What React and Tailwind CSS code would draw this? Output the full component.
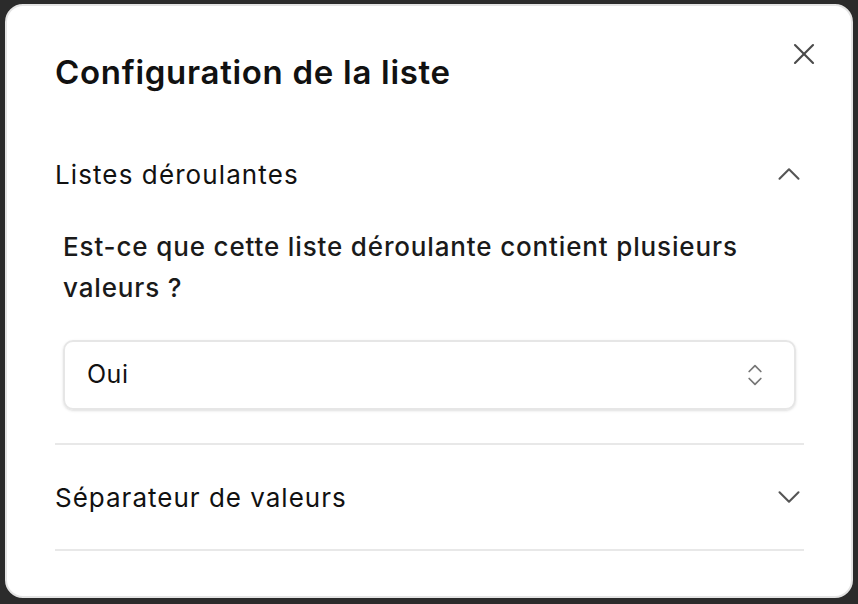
import { X, ChevronUp, ChevronDown, ChevronsUpDown } from "lucide-react";

export default function App() {
    return (
        <div className="w-[858px] h-[604px] bg-[#2b2b2b] pt-[4px] pl-[5px] pr-[5px] pb-[6px]" style={{ fontFamily: "Inter, 'Noto Sans', sans-serif" }}>
            <div className="relative w-full h-full bg-white border-2 border-[#e4e4e4] rounded-[18px] pl-12 pr-[47px] pt-[42px]">
                {/* Close */}
                <button className="absolute top-[30px] right-[29px] text-[#4a4a4a]">
                    <X size={36} strokeWidth={1.4} />
                </button>

                <h2 className="text-[33px] leading-[48px] font-semibold text-[#111] tracking-[0.7px]">
                    Configuration de la liste
                </h2>

                {/* Section 1 */}
                <div className="border-b-2 border-[#e8e8e8] mt-[46px]">
                    <div className="flex items-center justify-between h-[64px]">
                        <span className="text-[26px] text-[#111] tracking-[1.1px]">Listes déroulantes</span>
                        <ChevronUp size={38} strokeWidth={1.3} className="text-[#555] -mr-1" />
                    </div>
                    <div className="px-2 pb-[33px]">
                        <p className="text-[26px] leading-[41px] font-medium text-[#1a1a1a] tracking-[0.85px] mt-[20px]">
                            Est-ce que cette liste déroulante contient plusieurs valeurs ?
                        </p>
                        <div className="mt-[32px] h-[70px] flex items-center justify-between border-2 border-[#e6e6e6] rounded-[10px] shadow-sm pl-[22px] pr-[25px]">
                            <span className="text-[25px] text-[#111] tracking-[0.5px]">Oui</span>
                            <ChevronsUpDown size={28} strokeWidth={1.5} className="text-[#777]" />
                        </div>
                    </div>
                </div>

                {/* Section 2 */}
                <div className="border-b-2 border-[#e8e8e8]">
                    <div className="flex items-center justify-between h-[104px]">
                        <span className="text-[26px] text-[#111] tracking-[1px]">Séparateur de valeurs</span>
                        <ChevronDown size={38} strokeWidth={1.3} className="text-[#555] -mr-1" />
                    </div>
                </div>
            </div>
        </div>
    );
}
